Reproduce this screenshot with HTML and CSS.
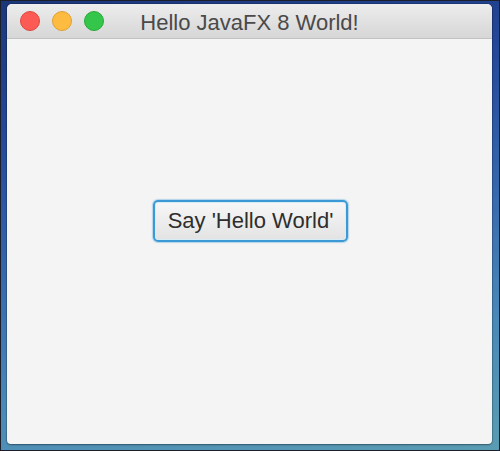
FILE: index.html
```html
<!doctype html>
<html lang="en">
<head>
<meta charset="utf-8">
<title>Hello JavaFX 8 World!</title>
<link rel="stylesheet" href="styles.css">
</head>
<body>

<div class="desktop">
	<div class="window">
		<div class="titlebar">
			<div class="lights">
				<span class="light light--close"></span>
				<span class="light light--min"></span>
				<span class="light light--max"></span>
			</div>
			<div class="title">Hello JavaFX 8 World!</div>
			<div></div>
		</div>

		<div class="content">
			<button type="button" class="say">Say 'Hello World'</button>
		</div>
	</div>
</div>

</body>
</html>
```

FILE: styles.css
```css
html, body {
	margin: 0;
	padding: 0;
}

.desktop {
	box-sizing: border-box;
	width: 500px;
	height: 451px;
	border: 1px solid #1a1f2a;
	padding: 3px 7px 6px 6px;
	background: linear-gradient(170deg, #1c367a 0%, #24489a 25%, #3566ad 50%, #4a88b8 75%, #5a9cb2 100%);
}

.window {
	display: flex;
	flex-direction: column;
	height: 100%;
	background-color: #f4f4f4;
	border-radius: 5px 5px 4px 4px;
	box-shadow: 0 0 0 1px rgba(0, 0, 0, 0.15), 0 1px 2px rgba(0, 0, 0, 0.3);
	overflow: hidden;
}

.titlebar {
	display: grid;
	grid-template-columns: 1fr auto 1fr;
	align-items: center;
	height: 34px;
	border-bottom: 1px solid #c2c2c2;
	background: linear-gradient(to bottom, #ededed, #d6d6d6);
	font-family: "Liberation Sans", Arial, sans-serif;
}

.lights {
	display: flex;
	gap: 12px;
	padding-left: 13px;
}

.light {
	box-sizing: border-box;
	display: block;
	width: 20px;
	height: 20px;
	border-radius: 50%;
}
.light--close {
	background-color: #fc5b55;
	border: 1px solid #e0463f;
}
.light--min {
	background-color: #fdbb3f;
	border: 1px solid #dfa032;
}
.light--max {
	background-color: #34c64a;
	border: 1px solid #28a838;
}

.title {
	padding-top: 4px;
	font-size: 22px;
	line-height: 28px;
	color: #4a4a4a;
}

.content {
	flex: 1;
	display: flex;
	justify-content: center;
	align-items: flex-start;
	padding-top: 161px;
	padding-left: 2px;
}

.say {
	box-sizing: border-box;
	height: 42px;
	margin: 0;
	padding: 0 13px;
	border: 2px solid #3b9ad6;
	border-radius: 5px;
	background: linear-gradient(to bottom, #f7f7f7, #e3e3e3);
	box-shadow: inset 0 0 0 1px #d8ecf8, 0 0 1px 1px rgba(59, 154, 214, 0.35);
	font-family: "Liberation Sans", Arial, sans-serif;
	font-size: 22px;
	line-height: 38px;
	color: #2e2e2e;
}
```
